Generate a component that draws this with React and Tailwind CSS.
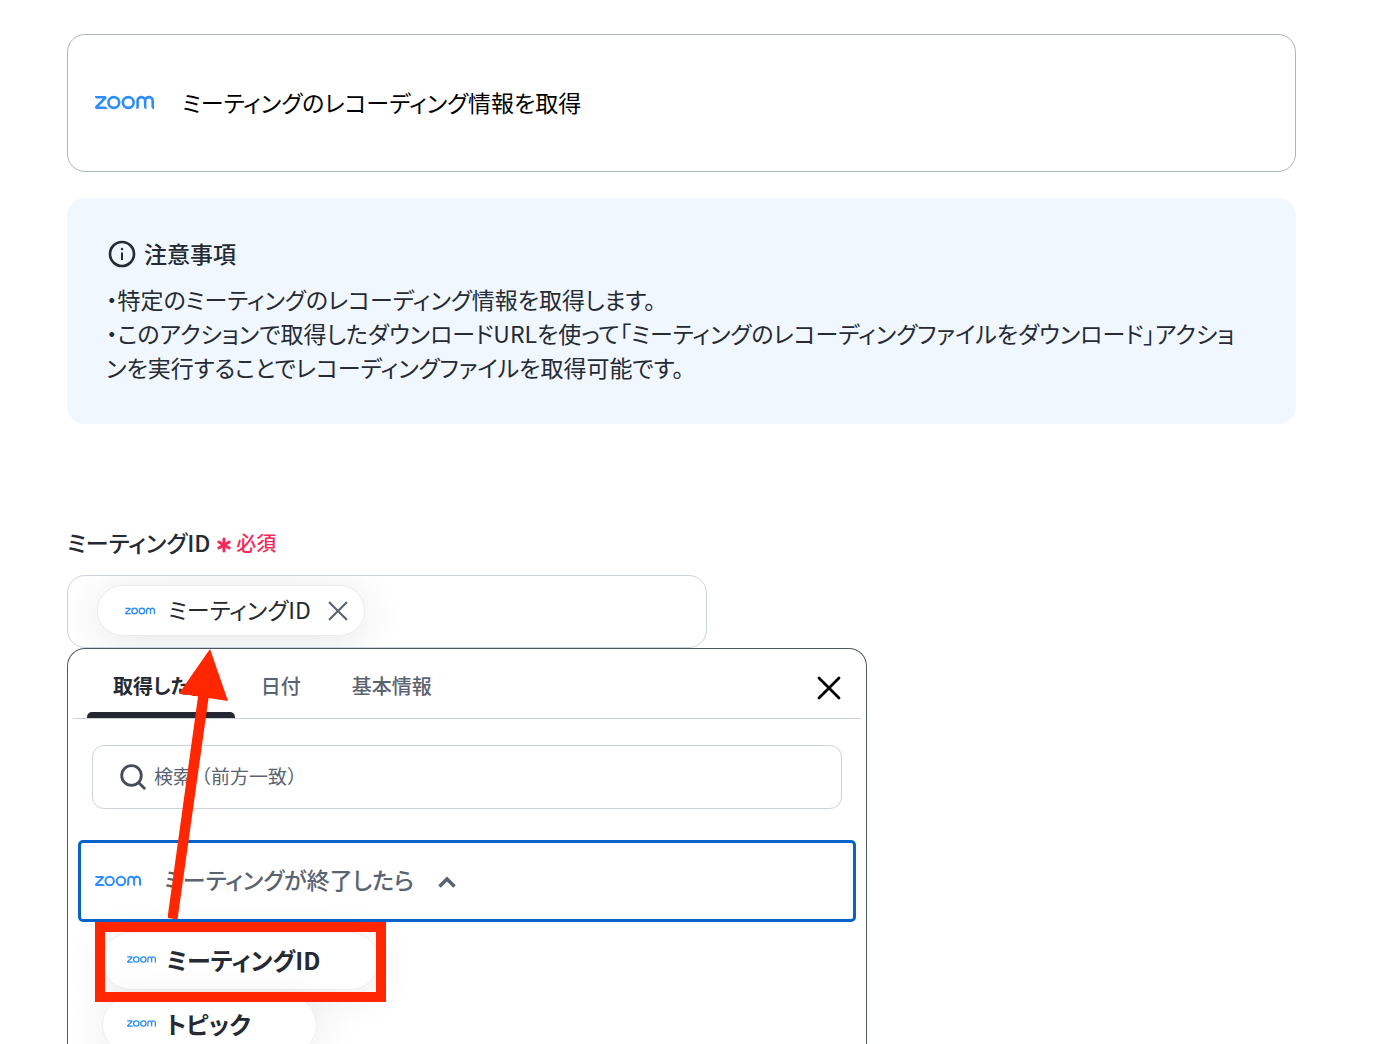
import React, { useState } from "react";
import { SiZoom } from "react-icons/si";
import { Asterisk } from "lucide-react";

const TABS = ["取得した値", "日付", "基本情報"];

function CloseIcon({ className, strokeWidth }) {
  return (
    <svg
      viewBox="0 0 24 24"
      fill="none"
      stroke="currentColor"
      strokeWidth={strokeWidth}
      strokeLinecap="round"
      className={className}
      aria-hidden="true"
    >
      <path d="M2 2 22 22M22 2 2 22" />
    </svg>
  );
}

function InfoIcon() {
  return (
    <svg viewBox="0 0 28 28" fill="none" stroke="currentColor" className="size-7" aria-hidden="true">
      <circle cx="14" cy="14" r="12" strokeWidth="2.6" />
      <path d="M14 12.6V20" strokeWidth="2" />
      <circle cx="14" cy="9" r="1.2" fill="currentColor" stroke="none" />
    </svg>
  );
}

function SearchIcon() {
  return (
    <svg
      viewBox="0 0 26 26"
      fill="none"
      stroke="currentColor"
      strokeWidth="2.8"
      strokeLinecap="round"
      className="size-[26px] shrink-0 text-[#454d5a]"
      aria-hidden="true"
    >
      <circle cx="11.5" cy="11.5" r="9.8" />
      <path d="M19 19 24.3 24.3" />
    </svg>
  );
}

function ActionCard() {
  return (
    <section className="flex h-[138px] items-center gap-7 rounded-[18px] border border-[#adb5be] px-[27px] pb-[2px]">
      <SiZoom className="size-[59px] text-[#2d8cff]" title="zoom" />
      <h1 className="text-[23px] leading-8 text-black">ミーティングのレコーディング情報を取得</h1>
    </section>
  );
}

function Notice() {
  return (
    <section className="mt-[26px] rounded-[18px] bg-[#f0f7ff] pt-10 pr-[50px] pb-10 pl-[39px] text-[23px] leading-[34px]">
      <h2 className="flex h-8 items-center gap-2 pl-[2px] font-medium">
        <InfoIcon />
        <span className="pb-[2px]">注意事項</span>
      </h2>
      <p className="mt-3">・特定のミーティングのレコーディング情報を取得します。</p>
      <p>
        ・このアクションで取得したダウンロードURLを使って「ミーティングのレコーディングファイルをダウンロード」アクションを実行することでレコーディングファイルを取得可能です。
      </p>
    </section>
  );
}

function OutputItem({ name, className, children }) {
  return (
    <li className="relative">
      <button
        type="button"
        className={`flex h-[58px] items-center gap-[10px] rounded-full border border-[#eceef1] bg-white pb-[3px] pl-6 text-[24px] font-bold shadow-[0_6px_44px_rgba(0,0,0,0.09)] ${className}`}
      >
        <SiZoom className="size-[29px] text-[#2d8cff]" />
        {name}
      </button>
      {children}
    </li>
  );
}

function OutputPicker() {
  const [activeTab, setActiveTab] = useState(TABS[0]);
  const [open, setOpen] = useState(true);

  return (
    <div className="relative w-[800px] max-w-full rounded-t-[18px] border border-b-0 border-[#4f5865] bg-white pb-20">
      <div className="mx-[5px] flex h-[70px] items-stretch border-b border-[#ccd3dc] pl-[14px]">
        {TABS.map((tab) => (
          <button
            key={tab}
            type="button"
            onClick={() => setActiveTab(tab)}
            className={`relative pr-[25px] pb-2 pl-[26px] pt-3 text-[20px] leading-none ${
              activeTab === tab ? "font-bold text-[#252a33]" : "font-medium text-[#5a6371]"
            }`}
          >
            {tab}
            {activeTab === tab && (
              <span className="absolute inset-x-0 bottom-0 h-[6px] rounded-t-[5px] bg-[#23272f]" />
            )}
          </button>
        ))}
        <button type="button" aria-label="閉じる" className="mr-5 ml-auto pt-2 text-black">
          <CloseIcon className="size-6" strokeWidth="2.8" />
        </button>
      </div>

      <label className="mx-6 mt-[26px] flex h-16 items-center gap-2 rounded-xl border border-[#ccd3dc] pb-[1px] pl-[27px]">
        <SearchIcon />
        <input
          type="text"
          placeholder="検索（前方一致）"
          aria-label="検索"
          className="min-w-0 flex-1 text-[19px] outline-none [font-feature-settings:normal] placeholder:text-[#5a6371]"
        />
      </label>

      <button
        type="button"
        onClick={() => setOpen(!open)}
        className="mx-[10px] mt-[31px] flex h-[82px] w-[calc(100%-20px)] items-center rounded-[5px] border-[3px] border-[#0762cc] pl-[14px] text-[23px] font-medium text-[#5a6371]"
      >
        <SiZoom className="size-[46px] text-[#2d8cff]" />
        <span className="ml-[23px] pb-[3px]">ミーティングが終了したら</span>
        <svg
          viewBox="0 0 18 12"
          fill="none"
          stroke="currentColor"
          strokeWidth="3.6"
          className="mt-[2px] ml-6 h-3 w-[18px]"
          aria-hidden="true"
        >
          <path d="M1.5 10.5 9 3l7.5 7.5" />
        </svg>
      </button>

      {open && (
        <ul className="mt-[10px] flex flex-col gap-[6px] pl-[34px]">
          <OutputItem name="ミーティングID" className="w-[277px]">
            <span className="absolute -top-[10px] -left-[7px] z-10 h-20 w-[291px] border-[10px] border-[#ff2600]" />
          </OutputItem>
          <OutputItem name="トピック" className="w-[215px]" />
        </ul>
      )}

      {/* annotation: drag the output up into the field */}
      <svg
        viewBox="0 0 60 272"
        fill="#ff2600"
        className="pointer-events-none absolute top-0 left-[100px] h-[272px] w-[60px]"
        aria-hidden="true"
      >
        <path d="M42 0 60 52 11 44.5Z" />
        <path d="M30.5 44 41 46 9.5 270.5-.5 269Z" />
      </svg>
    </div>
  );
}

function MeetingIdField() {
  const [filled, setFilled] = useState(true);

  return (
    <section className="mt-[101px]">
      <label htmlFor="meeting-id" className="flex h-9 items-center pb-[1px] text-[23px] font-medium">
        ミーティングID
        <Asterisk className="mt-1 ml-[2px] size-6 text-[#f5295a]" strokeWidth={3} />
        <span className="text-[20px] text-[#f5295a]">必須</span>
      </label>
      <div className="mt-[14px] flex h-[73px] w-[640px] max-w-full items-center overflow-hidden rounded-[18px] border border-[#ccd3dc] pr-4 pb-[2px] pl-[29px]">
        {filled && (
          <span className="flex h-[51px] shrink-0 items-center rounded-full border border-[#e9ebee] bg-white pr-4 pl-[27px] text-[23px] shadow-[0_6px_44px_rgba(0,0,0,0.1)]">
            <SiZoom className="mr-[13px] size-[30px] text-[#2d8cff]" />
            <span className="pb-[2px]">ミーティングID</span>
            <button type="button" aria-label="削除" onClick={() => setFilled(false)} className="ml-[17px] text-[#5a6371]">
              <CloseIcon className="size-5" strokeWidth="2.6" />
            </button>
          </span>
        )}
        <input id="meeting-id" type="text" className="h-full min-w-0 flex-1 text-[23px] outline-none" />
      </div>
      <OutputPicker />
    </section>
  );
}

export default function App() {
  return (
    <main
      lang="ja"
      className="h-screen overflow-hidden bg-white pt-[34px] pr-[98px] pl-[67px] font-['Noto_Sans_CJK_JP',sans-serif] text-[#252a33] [font-feature-settings:'palt']"
    >
      <ActionCard />
      <Notice />
      <MeetingIdField />
    </main>
  );
}
